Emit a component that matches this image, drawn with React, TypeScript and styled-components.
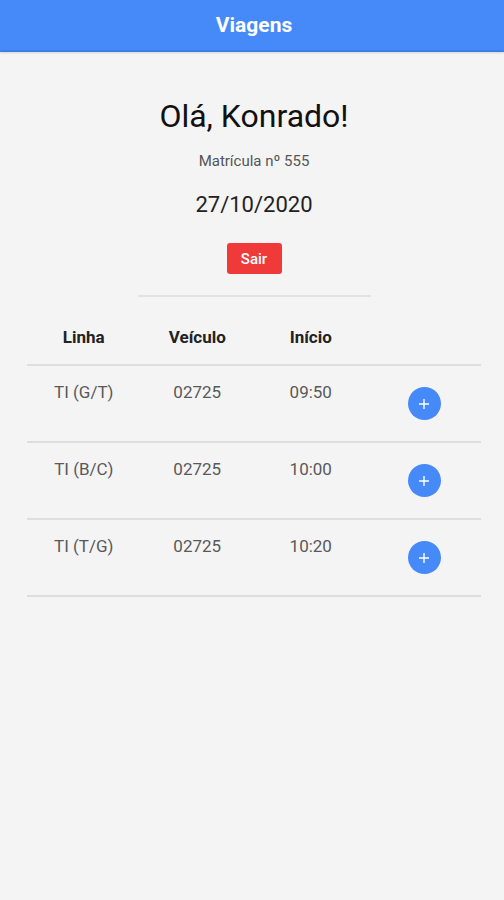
import styled, { createGlobalStyle } from "styled-components";

const GlobalStyle = createGlobalStyle`
  body {
    margin: 0;
    background: #f4f4f4;
    font-family: Roboto, "Noto Sans", Arial, sans-serif;
  }
`;

const Page = styled.div`
  min-height: 900px;
  background: #f4f4f4;
`;

const Header = styled.div`
  height: 50px;
  background: #4689f8;
  border-bottom: 2px solid #3f7ee6;
  box-shadow: 0 1px 2px rgba(0, 0, 0, 0.15);
  display: flex;
  align-items: center;
  justify-content: center;
  padding-left: 4px;
  color: #fff;
  font-size: 21px;
  font-weight: 700;
`;

const Content = styled.div`
  display: flex;
  flex-direction: column;
  align-items: center;
  padding-top: 45px;
  padding-left: 4px;
`;

const Greeting = styled.div`
  font-size: 32px;
  line-height: 38px;
  color: #111;
`;

const Registration = styled.div`
  margin-top: 17px;
  font-size: 15px;
  line-height: 18px;
  color: #555;
`;

const DateText = styled.div`
  margin-top: 22px;
  font-size: 22px;
  line-height: 26px;
  color: #222;
`;

const ExitButton = styled.button`
  margin-top: 25px;
  width: 55px;
  height: 31px;
  border: none;
  border-radius: 3px;
  background: #f03a3a;
  color: #fff;
  font-family: inherit;
  font-size: 15px;
  font-weight: 500;
`;

const Divider = styled.div`
  margin-top: 21px;
  width: 233px;
  height: 2px;
  background: #e2e2e2;
`;

const Table = styled.div`
  margin-top: 12px;
  width: 454px;
`;

const Row = styled.div<{ $head?: boolean }>`
  display: grid;
  grid-template-columns: repeat(4, 1fr);
  height: ${(p) => (p.$head ? "55px" : "75px")};
  align-items: ${(p) => (p.$head ? "center" : "start")};
  border-bottom: 2px solid #dedede;
`;

const HeadCell = styled.div`
  text-align: center;
  font-size: 17px;
  font-weight: 700;
  color: #222;
`;

const Cell = styled.div`
  padding-top: 16px;
  text-align: center;
  font-size: 17px;
  line-height: 20px;
  color: #595959;
`;

const AddCell = styled.div`
  align-self: center;
  display: flex;
  justify-content: center;
`;

const AddButton = styled.button`
  width: 33px;
  height: 33px;
  border-radius: 50%;
  border: none;
  background: #4689f8;
  display: flex;
  align-items: center;
  justify-content: center;
  padding: 0;
`;

const trips = [
  { linha: "TI (G/T)", veiculo: "02725", inicio: "09:50" },
  { linha: "TI (B/C)", veiculo: "02725", inicio: "10:00" },
  { linha: "TI (T/G)", veiculo: "02725", inicio: "10:20" },
];

export default function App() {
  return (
    <Page>
      <GlobalStyle />
      <Header>Viagens</Header>
      <Content>
        <Greeting>Olá, Konrado!</Greeting>
        <Registration>Matrícula nº 555</Registration>
        <DateText>27/10/2020</DateText>
        <ExitButton>Sair</ExitButton>
        <Divider />
        <Table>
          <Row $head>
            <HeadCell>Linha</HeadCell>
            <HeadCell>Veículo</HeadCell>
            <HeadCell>Início</HeadCell>
            <HeadCell />
          </Row>
          {trips.map((t) => (
            <Row key={t.inicio}>
              <Cell>{t.linha}</Cell>
              <Cell>{t.veiculo}</Cell>
              <Cell>{t.inicio}</Cell>
              <AddCell>
                <AddButton>
                  <svg width="12" height="12" viewBox="0 0 12 12">
                    <path d="M6 1v10M1 6h10" stroke="#fff" strokeWidth="1.4" />
                  </svg>
                </AddButton>
              </AddCell>
            </Row>
          ))}
        </Table>
      </Content>
    </Page>
  );
}
